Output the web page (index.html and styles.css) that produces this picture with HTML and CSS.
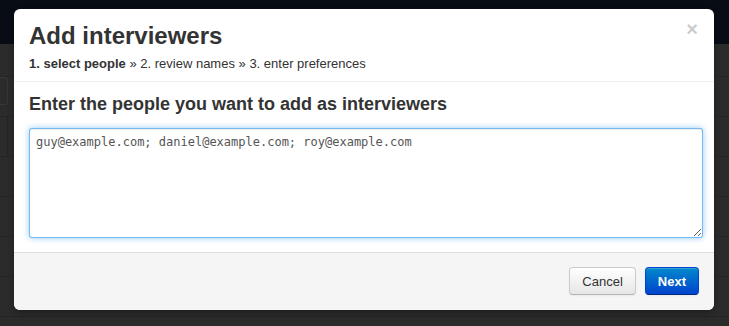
FILE: index.html
```html
<!DOCTYPE html>
<html lang="en">

<head>
  <meta charset="UTF-8">
  <meta name="viewport" content="width=device-width, initial-scale=1.0">
  <title>Add interviewers</title>
  <link rel="stylesheet" href="styles.css">
</head>

<body>
  <div class="navbar"></div>
  <div class="page">
    <div class="toolbar"></div>
    <div class="rows">
      <div class="row"><span class="search-box"></span></div>
      <div class="row"><span class="cell"></span></div>
      <div class="row"></div>
      <div class="row"></div>
      <div class="row"></div>
      <div class="row"></div>
    </div>
  </div>

  <div class="backdrop"></div>

  <div class="modal">
    <div class="modal-header">
      <span class="close">&times;</span>
      <h3>Add interviewers</h3>
      <div class="steps">
        <b>1. select people</b> &raquo; 2. review names &raquo; 3. enter preferences
      </div>
    </div>
    <div class="modal-body">
      <h4>Enter the people you want to add as interviewers</h4>
      <textarea class="people" spellcheck="false">guy@example.com; daniel@example.com; roy@example.com</textarea>
    </div>
    <div class="modal-footer">
      <button class="btn">Cancel</button>
      <button class="btn btn-primary">Next</button>
    </div>
  </div>
</body>

</html>
```

FILE: styles.css
```css
* {
  box-sizing: border-box;
}

html,
body {
  height: 326px;
  overflow: hidden;
}

body {
  margin: 0;
  font-family: "Liberation Sans", Arial, sans-serif;
  color: #333;
  background-color: #2e2e2e;
}

.navbar {
  height: 44px;
  background-color: #080d17;
}

.page .toolbar {
  height: 33px;
  border-bottom: 1px solid #282828;
}

.rows .row {
  height: 40px;
  border-bottom: 1px solid #282828;
}

.rows .search-box {
  display: block;
  width: 8px;
  height: 28px;
  border: 1px solid #3a3a3a;
  border-left: 0;
  border-radius: 0 3px 3px 0;
}

.rows .cell {
  display: block;
  width: 8px;
  height: 39px;
  border-right: 1px solid #262626;
}

.backdrop {
  position: absolute;
  inset: 0;
  background: rgba(0, 0, 0, 0.05);
}

.modal {
  position: absolute;
  top: 9px;
  left: 14px;
  width: 700px;
  height: 301px;
  display: flex;
  flex-direction: column;
  background-color: #fff;
  border-radius: 6px;
  overflow: hidden;
  box-shadow: 0 3px 7px rgba(0, 0, 0, 0.3);
}

.modal-header {
  position: relative;
  height: 73px;
  padding: 12px 15px 0;
  border-bottom: 1px solid #eee;
}

.modal-header h3 {
  margin: 0;
  font-size: 24px;
  line-height: 30px;
  font-weight: bold;
  color: #333;
}

.modal-header .steps {
  margin-top: 3px;
  font-size: 13px;
  line-height: 20px;
  color: #333;
}

.modal-header .close {
  position: absolute;
  top: 10px;
  right: 16px;
  font-size: 20px;
  font-weight: bold;
  line-height: 20px;
  color: #000;
  opacity: 0.2;
}

.modal-body {
  flex: 1;
  padding: 12px 15px 0;
}

.modal-body h4 {
  margin: 0 0 14px;
  font-size: 18px;
  line-height: 20px;
  font-weight: bold;
  color: #333;
}

.modal-body .people {
  display: block;
  width: 674px;
  height: 110px;
  margin: 0;
  padding: 5px 6px;
  font-family: "DejaVu Sans Mono", "Liberation Mono", monospace;
  font-size: 12px;
  line-height: 16px;
  color: #555;
  border: 1px solid rgba(82, 168, 236, 0.8);
  border-radius: 3px;
  box-shadow: inset 0 1px 1px rgba(0, 0, 0, 0.075), 0 0 6px rgba(82, 168, 236, 0.6);
  resize: both;
  outline: none;
}

.modal-footer {
  height: 58px;
  display: flex;
  justify-content: flex-end;
  align-items: flex-start;
  gap: 9px;
  padding: 14px 15px 0;
  background-color: #f5f5f5;
  border-top: 1px solid #ddd;
}

.btn {
  height: 28px;
  padding: 0 12px;
  font-family: "Liberation Sans", Arial, sans-serif;
  font-size: 13px;
  color: #333;
  background-image: linear-gradient(to bottom, #fff, #e6e6e6);
  border: 1px solid #ccc;
  border-bottom-color: #b3b3b3;
  border-radius: 4px;
  box-shadow: inset 0 1px 0 rgba(255, 255, 255, 0.2), 0 1px 2px rgba(0, 0, 0, 0.05);
  cursor: pointer;
}

.btn-primary {
  font-weight: bold;
  color: #fff;
  background-image: linear-gradient(to bottom, #0088cc, #0044cc);
  border-color: #0044cc #0044cc #002a80;
}
```
